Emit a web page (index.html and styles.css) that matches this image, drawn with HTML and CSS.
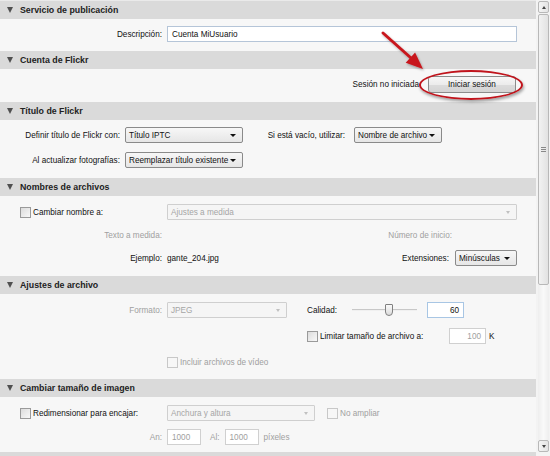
FILE: index.html
```html
<!DOCTYPE html>
<html lang="es">
<head>
<meta charset="utf-8">
<title>Servicio de publicación</title>
<link rel="stylesheet" href="styles.css">
</head>
<body>
<div class="window">
  <div class="panel">
    <section class="sec">
      <div class="hd"><span class="tri"></span>Servicio de publicación</div>
      <div class="bd bd-desc">
        <div class="row">
          <span class="lbl w162">Descripción:</span>
          <span class="input wide">Cuenta MiUsuario</span>
        </div>
      </div>
    </section>
    <section class="sec">
      <div class="hd"><span class="tri"></span>Cuenta de Flickr</div>
      <div class="bd bd-acct">
        <div class="row right">
          <span class="txt">Sesión no iniciada</span>
          <span class="btn-wrap">
            <span class="btn">Iniciar sesión</span>
            <span class="ring"></span>
          </span>
        </div>
        <svg class="arrow" width="60" height="60" viewBox="0 0 60 60">
          <defs>
            <filter id="sh" x="-20%" y="-20%" width="140%" height="140%">
              <feDropShadow dx="1" dy="1.5" stdDeviation="1" flood-color="#000" flood-opacity="0.3"/>
            </filter>
          </defs>
          <g filter="url(#sh)">
            <line x1="4" y1="4" x2="32" y2="29" stroke="#c8161d" stroke-width="3" stroke-linecap="round"/>
            <polygon points="44,40 26.7,33.8 36.1,23.4" fill="#c8161d"/>
          </g>
        </svg>
      </div>
    </section>
    <section class="sec">
      <div class="hd"><span class="tri"></span>Título de Flickr</div>
      <div class="bd bd-title">
        <div class="row">
          <span class="lbl w120">Definir título de Flickr con:</span>
          <span class="select w118">Título IPTC<i class="dd"></i></span>
          <span class="lbl l-vacio">Si está vacío, utilizar:</span>
          <span class="select w87">Nombre de archivo<i class="dd"></i></span>
        </div>
        <div class="row">
          <span class="lbl w120">Al actualizar fotografías:</span>
          <span class="select w118">Reemplazar título existente<i class="dd"></i></span>
        </div>
      </div>
    </section>
    <section class="sec">
      <div class="hd"><span class="tri"></span>Nombres de archivos</div>
      <div class="bd bd-names">
        <div class="row">
          <label class="chk w162"><span class="box"></span>Cambiar nombre a:</label>
          <span class="select dis wide">Ajustes a medida<i class="dd"></i></span>
        </div>
        <div class="row">
          <span class="lbl w162 gray">Texto a medida:</span>
          <span class="lbl l-num gray">Número de inicio:</span>
        </div>
        <div class="row pr">
          <span class="lbl w162">Ejemplo:</span>
          <span class="val">gante_204.jpg</span>
          <span class="lbl l-ext">Extensiones:</span>
          <span class="select w61">Minúsculas<i class="dd"></i></span>
        </div>
      </div>
    </section>
    <section class="sec">
      <div class="hd"><span class="tri"></span>Ajustes de archivo</div>
      <div class="bd bd-file">
        <div class="row">
          <span class="lbl w162 gray">Formato:</span>
          <span class="select dis w120">JPEG<i class="dd"></i></span>
          <span class="txt l-cal">Calidad:</span>
          <span class="slider"><span class="track"></span><span class="thumb"></span></span>
          <span class="input num w36 focus">60</span>
        </div>
        <div class="row">
          <label class="chk l-lim"><span class="box"></span>Limitar tamaño de archivo a:</label>
          <span class="input num w36 dim">100</span>
          <span class="txt k">K</span>
        </div>
        <div class="row">
          <span class="w162"></span>
          <label class="chk gray l-vid"><span class="box dis"></span>Incluir archivos de vídeo</label>
        </div>
      </div>
    </section>
    <section class="sec">
      <div class="hd"><span class="tri"></span>Cambiar tamaño de imagen</div>
      <div class="bd bd-size">
        <div class="row">
          <label class="chk w162"><span class="box"></span>Redimensionar para encajar:</label>
          <span class="select dis w148">Anchura y altura<i class="dd"></i></span>
          <label class="chk gray l-noamp"><span class="box dis"></span>No ampliar</label>
        </div>
        <div class="row">
          <span class="lbl w162 gray">An:</span>
          <span class="input w34 dim l">1000</span>
          <span class="lbl gray l-al">Al:</span>
          <span class="input w34 dim l">1000</span>
          <span class="txt gray l-px">píxeles</span>
        </div>
      </div>
    </section>
    <section class="sec">
      <div class="hd"></div>
    </section>
  </div>
  <div class="scrollbar">
    <div class="sb-btn up"></div>
    <div class="sb-thumb"><span class="grip"></span></div>
    <div class="sb-track"></div>
    <div class="sb-btn down"></div>
  </div>
</div>
</body>
</html>
```
FILE: styles.css
```css
* { box-sizing: border-box; }
html, body { margin: 0; padding: 0; background: #f5f5f5; }
body {
  font-family: "Liberation Sans", Arial, sans-serif;
  font-size: 8.2px;
  color: #111;
  width: 550px;
  height: 456px;
  overflow: hidden;
}
.window { display: flex; height: 456px; }
.panel { width: 536px; display: flex; flex-direction: column; border-top: 1px solid #eaeaea; }
.sec { display: flex; flex-direction: column; }
.hd {
  height: 18px;
  background: #dadada;
  font-weight: bold;
  font-size: 8.8px;
  color: #222;
  display: flex;
  align-items: center;
  padding-left: 7px;
  flex-shrink: 0;
}
.tri {
  width: 0; height: 0;
  border-left: 3.5px solid transparent;
  border-right: 3.5px solid transparent;
  border-top: 6px solid #505050;
  margin-right: 7px;
}
.bd { background: #f7f7f7; display: flex; flex-direction: column; position: relative; }
.bd-desc { height: 32px; padding-top: 7px; }
.bd-acct { height: 33px; padding-top: 7px; }
.bd-title { height: 58px; padding-top: 7px; gap: 9px; }
.bd-names { height: 80px; padding-top: 8px; gap: 7px; }
.bd-file { height: 85px; padding-top: 8px; gap: 10px; }
.bd-size { height: 55px; padding-top: 8px; gap: 8px; }
.row { display: flex; align-items: center; height: 16px; }
.row.right { justify-content: flex-end; padding-right: 20px; }
.row.pr { padding-right: 19px; }
.lbl { text-align: right; padding-right: 5px; flex-shrink: 0; }
.w162 { width: 167px; }
.w120 { width: 125px; }
.gray { color: #a0a0a0; }
.l-vacio { width: 111px; text-align: right; padding-right: 9px; }
.l-num { width: 290px; }
.l-ext { margin-left: auto; width: auto; padding-right: 6px; }
.txt { flex-shrink: 0; }
.input {
  height: 16px;
  border: 1px solid #b5c5d8;
  background: #fff;
  padding: 0 4px;
  display: flex; align-items: center;
  white-space: nowrap;
}
.input.wide { width: 350px; }
.input.num { justify-content: flex-end; }
.input.l { justify-content: flex-start; }
.input.dim { border-color: #d0d0d0; color: #a0a0a0; background: #fff; }
.input.focus { border-color: #a8c6e4; }
.w36 { width: 37px; }
.w34 { width: 34px; }
.select {
  position: relative;
  height: 16px;
  border: 1px solid #8a8a8a;
  border-radius: 2px;
  background: linear-gradient(#f7f7f7, #e6e6e6);
  padding: 0 16px 0 3px;
  display: flex; align-items: center;
  white-space: nowrap;
  flex-shrink: 0;
}
.select .dd {
  position: absolute; right: 6px; top: 6px;
  width: 0; height: 0;
  border-left: 3px solid transparent;
  border-right: 3px solid transparent;
  border-top: 3px solid #111;
}
.select.dis { border-color: #cfcfcf; background: #f5f5f5; color: #a5a5a5; border-radius: 1px; }
.select.dis .dd { border-top-color: #c0c0c0; border-left-width: 2.5px; border-right-width: 2.5px; }
.select.wide { width: 350px; }
.select.w118 { width: 118px; }
.select.w87 { width: 88px; }
.select.w61 { width: 62px; }
.select.w120 { width: 120px; }
.select.w148 { width: 148px; }
.chk { display: flex; align-items: center; flex-shrink: 0; }
.chk.w162 { padding-left: 20px; }
.box {
  width: 11px; height: 11px;
  border: 1px solid #9a9a9a;
  background: linear-gradient(135deg, #dcdcdc, #f8f8f8);
  margin-right: 2px;
}
.box.dis { border-color: #c8c8c8; background: #f7f7f7; }
.l-cal { margin-left: 20px; width: 45px; }
.slider { position: relative; width: 65px; height: 16px; margin-right: 10px; }
.slider .track { position: absolute; left: 0; right: 0; top: 7px; height: 2px; border-top: 1px solid #c8c8c8; border-bottom: 1px solid #f0f0f0; }
.slider .thumb {
  position: absolute; left: 33px; top: 2px; width: 8px; height: 12px;
  border: 1px solid #808080;
  border-radius: 1px 1px 4px 4px;
  background: linear-gradient(#fafafa, #dcdcdc);
}
.l-lim { margin-left: 307px; width: 142px; }
.k { margin-left: 3px; }
.l-noamp { margin-left: 12px; }
.l-al { padding-left: 9px; padding-right: 5px; }
.l-px { margin-left: 5px; }
.btn-wrap { position: relative; margin-left: 9px; }
.btn {
  display: flex; align-items: center; justify-content: center;
  width: 88px; height: 17px;
  border: 1px solid #8c8c8c;
  border-radius: 3px;
  background: linear-gradient(#f6f6f6 0%, #ececec 50%, #dcdcdc 51%, #d4d4d4 100%);
}
.ring {
  position: absolute;
  left: -9px; top: -6px; width: 104px; height: 30px;
  border: 2px solid #c0141c;
  border-radius: 50%;
  box-shadow: 1px 2px 3px rgba(0,0,0,0.35);
}
.arrow { position: absolute; left: 379px; top: -40px; overflow: visible; }
.scrollbar {
  width: 14px; padding: 1px 1px 4px 2px;
  display: flex; flex-direction: column;
  background: #f3f3f3;
}
.sb-btn {
  height: 12px; border: 1px solid #b8b8b8; border-radius: 2px;
  background: linear-gradient(90deg, #f4f4f4, #e4e4e4);
  position: relative; flex-shrink: 0;
}
.sb-btn::after {
  content: ""; position: absolute; left: 3px; top: 4px;
  border-left: 2.5px solid transparent; border-right: 2.5px solid transparent;
}
.sb-btn.up::after { border-bottom: 3px solid #444; }
.sb-btn.down::after { border-top: 3px solid #444; }
.sb-thumb {
  height: 271px; margin-top: 1px;
  border: 1px solid #b8b8b8; border-radius: 2px;
  background: linear-gradient(90deg, #f2f2f2, #e2e2e2);
  display: flex; align-items: center; justify-content: center;
}
.grip { width: 5px; height: 5px; border-top: 1px solid #888; border-bottom: 1px solid #888; position: relative; }
.grip::after { content: ""; position: absolute; left: 0; right: 0; top: 1px; border-top: 1px solid #888; }
.sb-track { flex: 1; background: linear-gradient(90deg, #eeeeee, #f9f9f9, #eeeeee); }
```
